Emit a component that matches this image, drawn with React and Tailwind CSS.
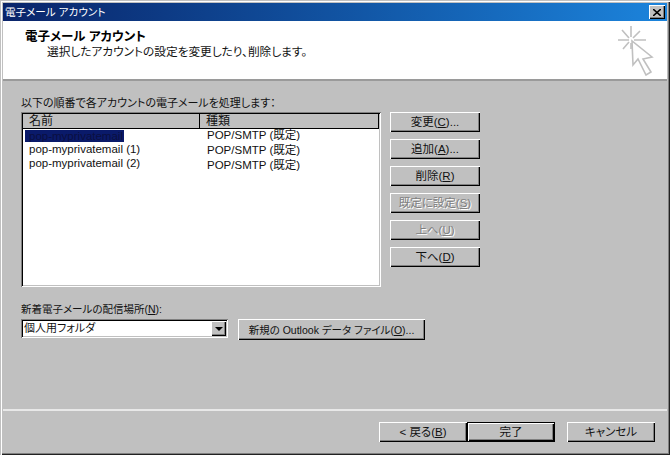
const raised = 'shadow-[inset_1px_1px_0_#fff,inset_-1px_-1px_0_#000,inset_-2px_-2px_0_#808080]'
const sunken = 'shadow-[inset_1px_1px_0_#808080,inset_-1px_-1px_0_#fff,inset_2px_2px_0_#000,inset_-2px_-2px_0_#c0c0c0]'

function U({ children }) {
  return <span className="underline underline-offset-1">{children}</span>
}

function Btn({ children, className = '', disabled = false }) {
  return (
    <div
      className={`flex h-[20px] items-center justify-center bg-[#c0c0c0] pt-px text-[11.5px] leading-none whitespace-nowrap ${raised} ${
        disabled ? 'text-[#808080] [text-shadow:1px_1px_0_#fff]' : 'text-[#111]'
      } ${className}`}
    >
      {children}
    </div>
  )
}

function CursorIcon() {
  return (
    <svg width="40" height="50" viewBox="0 0 40 50" className="mt-[5px] shrink-0" fill="none" stroke="#c0c0c0">
      <g strokeWidth="1.6">
        <path d="M13 0v11M13 17v6M0 14h11M16 14h12M4 4l7 8M22 5l-7 7M5 23l6-7" />
      </g>
      <path d="M14 15l1 24 5-6 8 16 5-3-8-13 9-2z" fill="#fff" strokeWidth="1.6" />
    </svg>
  )
}

function Row({ children, className = '' }) {
  return <div className={`text-[11.5px] leading-none whitespace-nowrap ${className}`}>{children}</div>
}

export default function App() {
  return (
    <div
      className="flex h-[455px] w-[670px] flex-col overflow-hidden bg-[#c0c0c0] pt-[3px] pr-[3px] pb-[2px] pl-[3px] text-[#111] [font-feature-settings:'palt'] shadow-[inset_1px_1px_0_#c0c0c0,inset_2px_2px_0_#fff,inset_-1px_-1px_0_#222,inset_-2px_-2px_0_#808080]"
      style={{ fontFamily: '"Liberation Sans", "Noto Sans CJK JP", sans-serif' }}
    >
      {/* title bar */}
      <div className="flex h-[18px] shrink-0 items-center justify-between bg-gradient-to-r from-[#0a246a] to-[#1c84dc] pr-[2px]">
        <span className="pl-[2px] text-[10.6px] leading-none text-white">電子メール アカウント</span>
        <div className={`flex h-[14px] w-[16px] items-center justify-center bg-[#c0c0c0] ${raised}`}>
          <svg width="8" height="7" viewBox="0 0 8 7" stroke="#000" strokeWidth="1.6" fill="none">
            <path d="M0 0l8 7M8 0L0 7" />
          </svg>
        </div>
      </div>

      {/* header */}
      <div className="flex h-[60px] shrink-0 justify-between border-b-2 border-b-[#9a9a9a] bg-white pr-[9px]">
        <div className="pt-[9px] pl-[22px]">
          <div className="text-[12.5px] leading-[14px] font-bold text-black">電子メール アカウント</div>
          <div className="mt-px pl-[22px] text-[11.7px] leading-[14px]">選択したアカウントの設定を変更したり、削除します。</div>
        </div>
        <CursorIcon />
      </div>

      {/* body */}
      <div className="flex min-h-0 flex-1 flex-col">
        <div className="h-[330px] shrink-0 border-b-2 border-b-[#e8e8e8] pt-[15px] pl-[18px]">
          <div className="text-[11px] leading-[14px]">以下の順番で各アカウントの電子メールを処理します：</div>
          <div className="mt-[2px] flex items-start gap-[9px]">
            <div className={`h-[175px] w-[360px] bg-white p-[2px] ${sunken}`}>
              <div className="flex h-[15px] bg-[#c0c0c0] text-[12px] leading-[14px] shadow-[inset_-1px_-1px_0_#000]">
                <div className="w-[177px] border-r border-r-[#000] pl-[6px]">名前</div>
                <div className="pl-[6px]">種類</div>
              </div>
              <div className="flex">
                <div className="w-[177px] shrink-0 pt-[1px] pl-[2px]">
                  <div className="h-[12px] w-[99px] overflow-hidden bg-[#0a1a6a] pl-[4px] text-[11.5px] leading-[12px] text-[#0a0f40]">pop-myprivatemail</div>
                  <Row className="mt-[2px] pl-[4px]">pop-myprivatemail (1)</Row>
                  <Row className="mt-[2px] pl-[4px]">pop-myprivatemail (2)</Row>
                </div>
                <div className="pt-px pl-[7px]">
                  <Row>POP/SMTP (既定)</Row>
                  <Row className="mt-[3.5px]">POP/SMTP (既定)</Row>
                  <Row className="mt-[3.5px]">POP/SMTP (既定)</Row>
                </div>
              </div>
            </div>
            <div className="flex w-[90px] flex-col gap-[7px]">
              <Btn>変更(<U>C</U>)...</Btn>
              <Btn>追加(<U>A</U>)...</Btn>
              <Btn>削除(<U>R</U>)</Btn>
              <Btn disabled>既定に設定(<U>S</U>)</Btn>
              <Btn disabled>上へ(<U>U</U>)</Btn>
              <Btn>下へ(<U>D</U>)</Btn>
            </div>
          </div>
          <div className="mt-[15px] text-[10.5px] leading-[14px]">新着電子メールの配信場所(<U>N</U>):</div>
          <div className="mt-[3px] flex items-start gap-[10px]">
            <div className={`flex h-[19px] w-[207px] items-center justify-between bg-white pr-[2px] pl-[3px] text-[11px] leading-none ${sunken}`}>
              <span>個人用フォルダ</span>
              <div className={`flex h-[15px] w-[15px] items-center justify-center bg-[#c0c0c0] ${raised}`}>
                <div className="h-0 w-0 border-x-[4px] border-t-[4px] border-x-transparent border-t-black" />
              </div>
            </div>
            <Btn className="w-[187px] !h-[21px] !text-[10.5px]">新規の Outlook データ ファイル(<U>O</U>)...</Btn>
          </div>
        </div>

        {/* footer */}
        <div className="flex justify-end pt-[11px] pr-[12px]">
          <Btn className="w-[88px]">&lt; 戻る(<U>B</U>)</Btn>
          <Btn className="w-[88px] border border-black">完了</Btn>
          <Btn className="ml-[12px] w-[88px]">キャンセル</Btn>
        </div>
      </div>
    </div>
  )
}
